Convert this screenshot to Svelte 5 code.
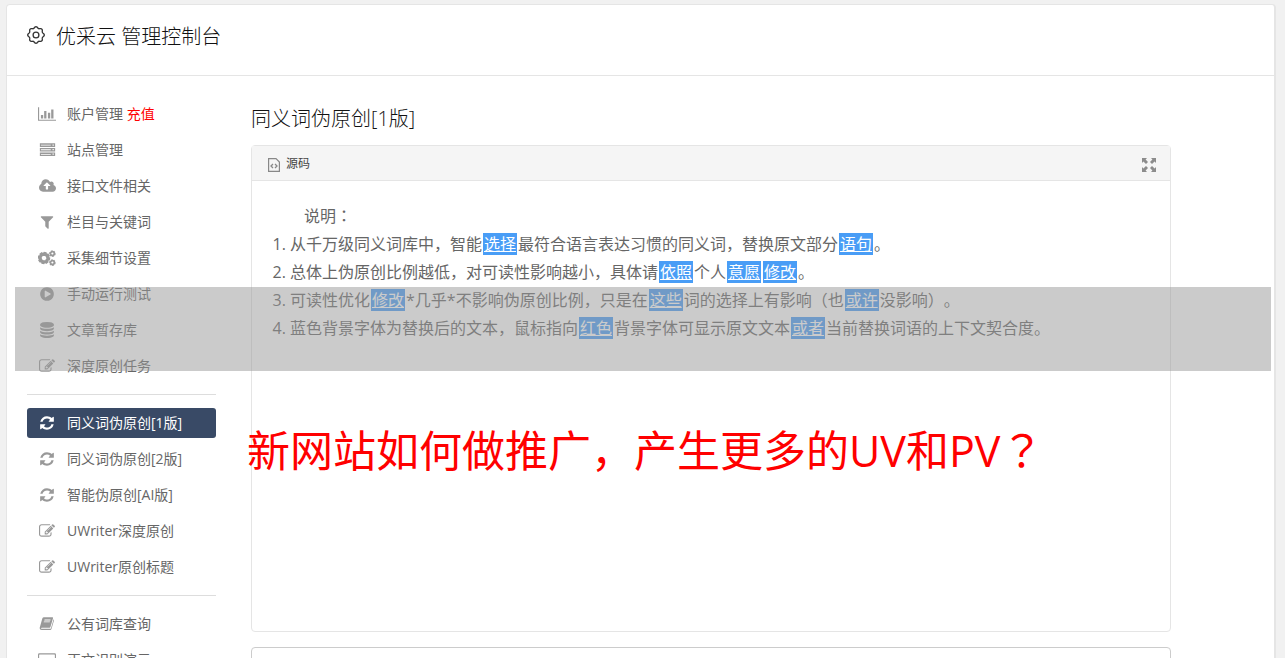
<script lang="ts">
	type Item = { icon: string; label: string; extra?: string; active?: boolean };
	type Part = { text: string; swap?: boolean };

	const groups: Item[][] = [
		[
			{ icon: 'chart', label: '账户管理', extra: '充值' },
			{ icon: 'server', label: '站点管理' },
			{ icon: 'cloud', label: '接口文件相关' },
			{ icon: 'filter', label: '栏目与关键词' },
			{ icon: 'cogs', label: '采集细节设置' },
			{ icon: 'play', label: '手动运行测试' },
			{ icon: 'database', label: '文章暂存库' },
			{ icon: 'edit', label: '深度原创任务' }
		],
		[
			{ icon: 'refresh', label: '同义词伪原创[1版]', active: true },
			{ icon: 'refresh', label: '同义词伪原创[2版]' },
			{ icon: 'refresh', label: '智能伪原创[AI版]' },
			{ icon: 'edit', label: 'UWriter深度原创' },
			{ icon: 'edit', label: 'UWriter原创标题' }
		],
		[
			{ icon: 'book', label: '公有词库查询' },
			{ icon: 'laptop', label: '正文识别演示' }
		]
	];

	// words between braces are the ones that were replaced by a synonym
	const notes = [
		'从千万级同义词库中，智能{选择}最符合语言表达习惯的同义词，替换原文部分{语句}。',
		'总体上伪原创比例越低，对可读性影响越小，具体请{依照}个人{意愿}{修改}。',
		'可读性优化{修改}*几乎*不影响伪原创比例，只是在{这些}词的选择上有影响（也{或许}没影响）。',
		'蓝色背景字体为替换后的文本，鼠标指向{红色}背景字体可显示原文文本{或者}当前替换词语的上下文契合度。'
	];

	function split(s: string): Part[] {
		return s
			.split(/(\{.+?\})/)
			.filter(Boolean)
			.map((t) => (t[0] === '{' ? { text: t.slice(1, -1), swap: true } : { text: t }));
	}

	const icons: Record<string, { box: string; w: number; d: string }> = {
		chart: {
			box: '0 0 2048 1792',
			w: 18,
			d: 'M0 128h128v1408h1920v128H0zM330 1000h260v420H330zM700 560h260v860H700zM1130 760h260v660h-260zM1500 380h260v1040h-260z'
		},
		server: {
			box: '0 0 1792 1792',
			w: 17,
			d: 'M40 150h1712v400H40zM160 310v90h1100v-90zM1460 280v140h140V280zM40 660h1712v400H40zM160 820v90h1100v-90zM1460 790v140h140V790zM40 1170h1712v400H40zM160 1330v90h1100v-90zM1460 1300v140h140v-140z'
		},
		cloud: {
			box: '-64 0 1920 1792',
			w: 17,
			d: 'M1216 864q0-14-9-23l-352-352q-9-9-23-9t-23 9l-351 351q-10 12-10 24 0 14 9 23t23 9h224v352q0 13 9.500 22.500t22.500 9.500h192q13 0 22.500-9.500t9.500-22.500v-352h224q13 0 22.500-9.500t9.500-22.500zm640 288q0 159-112.500 271.500t-271.500 112.500h-1088q-185 0-316.500-131.500t-131.500-316.500q0-130 70-240t188-165q-2-30-2-43 0-212 150-362t362-150q156 0 285.500 87t188.500 231q71-62 166-62 106 0 181 75t75 181q0 76-41 138 130 31 213.500 135.500t83.500 238.500z'
		},
		filter: {
			box: '0 0 1792 1792',
			w: 16,
			d: 'M1595 295q17 41-14 70l-493 493v742q0 42-39 59-13 5-25 5-27 0-45-19l-256-256q-19-19-19-45v-486l-493-493q-31-29-14-70 17-39 59-39h1280q42 0 59 39z'
		},
		play: {
			box: '0 0 1792 1792',
			w: 16,
			d: 'M896 128q209 0 385.500 103t279.500 279.500 103 385.500-103 385.500-279.500 279.500-385.500 103-385.500-103-279.500-279.500-103-385.500 103-385.500 279.500-279.500 385.500-103zm384 823q32-18 32-55t-32-55l-544-320q-31-19-64-1-32 19-32 56v640q0 37 32 56 16 8 32 8 17 0 32-9z'
		},
		database: {
			box: '0 0 1792 1792',
			w: 16,
			d: 'M896 768q237 0 443-43t325-127v170q0 69-103 128t-280 93.500-385 34.500-385-34.500-280-93.500-103-128v-170q119 84 325 127t443 43zm0 768q237 0 443-43t325-127v170q0 69-103 128t-280 93.500-385 34.500-385-34.500-280-93.500-103-128v-170q119 84 325 127t443 43zm0-384q237 0 443-43t325-127v170q0 69-103 128t-280 93.500-385 34.500-385-34.500-280-93.500-103-128v-170q119 84 325 127t443 43zm0-1152q208 0 385 34.500t280 93.500 103 128v128q0 69-103 128t-280 93.500-385 34.500-385-34.500-280-93.500-103-128v-128q0-69 103-128t280-93.500 385-34.500z'
		},
		edit: {
			box: '0 0 1792 1792',
			w: 16,
			d: 'M888 1184l116-116-152-152-116 116v56h96v96h56zm440-720q-16-16-33 1l-350 350q-17 17-1 33t33-1l350-350q17-17 1-33zm80 594v190q0 119-84.500 203.500t-203.500 84.500h-832q-119 0-203.500-84.500t-84.500-203.500v-832q0-119 84.500-203.500t203.500-84.500h832q63 0 117 25 15 7 18 23 3 17-9 29l-49 49q-14 14-32 8-23-6-45-6h-832q-66 0-113 47t-47 113v832q0 66 47 113t113 47h832q66 0 113-47t47-113v-126q0-13 9-22l64-64q15-15 35-7t20 29zm-96-738l288 288-672 672h-288v-288zm444 132l-92 92-288-288 92-92q28-28 68-28t68 28l152 152q28 28 28 68t-28 68z'
		},
		refresh: {
			box: '0 0 1792 1792',
			w: 16,
			d: 'M1639 1056q0 5-1 7-64 268-268 434.500t-478 166.500q-146 0-282.500-55t-243.500-157l-129 129q-19 19-45 19t-45-19-19-45v-448q0-26 19-45t45-19h448q26 0 45 19t19 45-19 45l-137 137q71 66 161 102t187 36q134 0 250-65t186-179q11-17 53-117 8-23 30-23h192q13 0 22.500 9.500t9.500 22.500zm25-800v448q0 26-19 45t-45 19h-448q-26 0-45-19t-19-45 19-45l138-138q-148-137-349-137-134 0-250 65t-186 179q-11 17-53 117-8 23-30 23h-199q-13 0-22.500-9.500t-9.500-22.500v-7q65-268 270-434.500t480-166.500q146 0 284 55.500t245 156.500l130-129q19-19 45-19t45 19 19 45z'
		},
		book: {
			box: '0 0 1792 1792',
			w: 16,
			d: 'M560 128h940q100 0 70 110l-290 1000q-22 74-90 74H300q-70 0-70 50 0 60 90 60h940q60 0 80-60l300-990q60 30 40 120l-280 940q-40 132-150 132H300Q60 1564 70 1330L370 270Q420 128 560 128zM620 400l-28 90h680l28-90zM550 620l-28 90h680l28-90z'
		},
		laptop: {
			box: '0 0 2048 1792',
			w: 18,
			d: 'M160 128h1728q160 0 160 160v1088q0 160-160 160H160Q0 1536 0 1376V288q0-160 160-160zM192 256q-64 0-64 64v1024h1792V320q0-64-64-64z'
		}
	};

	// toothed wheel for the settings entry
	function gear(cx: number, cy: number, r: number, teeth: number, depth: number): string {
		const pts: string[] = [];
		const n = teeth * 4;
		for (let i = 0; i < n; i++) {
			const a = ((i + 0.5) / n) * Math.PI * 2;
			const rr = i % 4 < 2 ? r : r - depth;
			pts.push(`${(cx + rr * Math.cos(a)).toFixed(2)} ${(cy + rr * Math.sin(a)).toFixed(2)}`);
		}
		return `M${pts.join('L')}Z`;
	}

	// softly waved wheel for the header
	function wave(c: number, r: number, lobes: number, depth: number): string {
		const pts: string[] = [];
		for (let i = 0; i < 96; i++) {
			const a = (i / 96) * Math.PI * 2;
			const rr = r + depth * Math.cos(lobes * a);
			pts.push(`${(c + rr * Math.cos(a)).toFixed(2)} ${(c + rr * Math.sin(a)).toFixed(2)}`);
		}
		return `M${pts.join('L')}Z`;
	}
</script>

<svelte:head>
	<title>优采云 管理控制台</title>
</svelte:head>

{#snippet icon(name: string)}
	{#if name === 'cogs'}
		<svg width="18" height="16" viewBox="0 0 18 16" aria-hidden="true">
			<g fill="none" stroke="currentColor">
				<path d={gear(6, 8, 4.8, 8, 1.2)} stroke-width="2.8" />
				<path d={gear(14.4, 3.6, 2.4, 6, 0.6)} stroke-width="1.7" />
				<path d={gear(14.4, 12.6, 2.4, 6, 0.6)} stroke-width="1.7" />
			</g>
		</svg>
	{:else}
		<svg width={icons[name].w} height="16" viewBox={icons[name].box} aria-hidden="true">
			<path d={icons[name].d} fill="currentColor" fill-rule="evenodd" />
		</svg>
	{/if}
{/snippet}

<div class="page">
	<div class="card">
		<header>
			<svg width="20" height="20" viewBox="0 0 20 20" aria-hidden="true">
				<g fill="none" stroke="currentColor" stroke-width="1.3">
					<path d={wave(10, 7.6, 8, 0.7)} />
					<circle cx="10" cy="10" r="2.9" />
				</g>
			</svg>
			<h1>优采云 管理控制台</h1>
		</header>

		<div class="body">
			<nav>
				{#each groups as items}
					<ul>
						{#each items as item}
							<li>
								<a href="#top" class:active={item.active}>
									<span class="icon">{@render icon(item.icon)}</span>
									<span class="label">{item.label}{#if item.extra}{' '}<em>{item.extra}</em>{/if}</span>
								</a>
							</li>
						{/each}
					</ul>
				{/each}
			</nav>

			<main>
				<h2>同义词伪原创[1版]</h2>

				<div class="editor">
					<div class="toolbar">
						<button type="button">
							<svg width="12" height="14" viewBox="0 0 12 14" aria-hidden="true">
								<g fill="none" stroke="#888">
									<path d="M.6.6h7.400l3.400 3.400v9.400H.6z" stroke-width="1.200" />
									<path d="M5 6L3 8l2 2M7 6l2 2-2 2" stroke-width="1.300" />
								</g>
							</svg>
							源码
						</button>
						<button type="button" aria-label="全屏">
							<svg width="14" height="14" viewBox="0 0 14 14" aria-hidden="true">
								<path
									d="M0 0h5L3.600 1.400 6 4 4 6 1.400 3.600 0 5zM14 0v5l-1.400-1.400L10 6 8 4l2.400-2.600L9 0zM0 14V9l1.400 1.400L4 8l2 2-2.400 2.600L5 14zM14 14H9l1.400-1.400L8 10l2-2 2.600 2.400L14 9z"
									fill="#8c8c8c"
								/>
							</svg>
						</button>
					</div>
					<div class="content">
						<p>说明<span class="mid">：</span></p>
						<ol>
							{#each notes as note}
								<li>
									{#each split(note) as part}{#if part.swap}<u>{part.text}</u>{:else}{part.text}{/if}{/each}
								</li>
							{/each}
						</ol>
					</div>
				</div>

				<textarea aria-label="原文"></textarea>
			</main>
		</div>
	</div>

	<div class="band"></div>
	<p class="headline">新网站如何做推广，产生更多的UV和PV<span class="mid">？</span></p>
</div>

<style>
	:global(body) {
		background: #f1f1f1;
	}
	.page {
		position: relative;
		box-sizing: border-box;
		height: 100vh;
		overflow: hidden;
		padding: 4px 9px 0 6px;
		font-family: 'Open Sans', 'Noto Sans CJK SC', sans-serif;
		font-size: 14px;
		text-spacing-trim: space-all;
		color: #666;
	}
	.card {
		background: #fff;
		border: 1px solid #e5e5e5;
		border-right-width: 2px;
		border-radius: 4px;
	}
	header {
		display: flex;
		align-items: center;
		gap: 10px;
		height: 60px;
		padding: 0 19px 10px;
		border-bottom: 1px solid #e5e5e5;
		color: #333;
	}
	h1,
	h2 {
		margin: 0;
		font-size: 20px;
		font-weight: 300;
		line-height: 28px;
		color: #111;
	}
	h1 {
		padding-top: 3px;
	}
	.body {
		display: flex;
		gap: 35px;
		padding: 23px 103px 40px 20px;
	}
	nav {
		flex: 0 0 189px;
	}
	ul {
		display: flex;
		flex-direction: column;
		gap: 6px;
		margin: 0;
		padding: 0;
		list-style: none;
	}
	ul + ul {
		margin-top: 13px;
		padding-top: 13px;
		border-top: 1px solid #ddd;
	}
	a {
		display: flex;
		align-items: center;
		gap: 10px;
		height: 30px;
		padding: 0 10px;
		border-radius: 3px;
		color: #666;
		text-decoration: none;
		white-space: nowrap;
	}
	a.active {
		background: #394a66;
		color: #fff;
	}
	.icon {
		display: flex;
		justify-content: center;
		width: 20px;
		color: #999;
	}
	.active .icon {
		color: #fff;
	}
	.label {
		padding-bottom: 2px;
	}
	em {
		font-style: normal;
		color: #f00;
	}
	main {
		flex: 1;
		min-width: 0;
		padding-top: 6px;
	}
	.editor {
		margin: 12px 0 15px;
		border: 1px solid #e5e5e5;
		border-radius: 4px;
	}
	.toolbar {
		display: flex;
		align-items: center;
		justify-content: space-between;
		height: 34px;
		padding: 0 14px 0 16px;
		border-bottom: 1px solid #e5e5e5;
		background: #f5f5f5;
	}
	button {
		display: flex;
		align-items: center;
		gap: 6px;
		padding: 0;
		border: 0;
		background: none;
		font: inherit;
		font-size: 12px;
		color: #444;
	}
	button svg {
		margin-top: 3px;
	}
	.content {
		min-height: 408px;
		padding: 21px 20px;
		font-size: 16px;
		line-height: 28px;
	}
	.content p {
		margin: 0;
		text-indent: 2em;
	}
	ol {
		margin: 0;
		padding-left: 18px;
	}
	u {
		margin: 0 1px;
		padding: 0 1px;
		background: #499df6;
		color: #fff;
	}
	/* punctuation centred in its cell */
	.mid {
		font-family: 'Noto Sans CJK JP', sans-serif;
		line-height: 1;
	}
	textarea {
		display: block;
		box-sizing: border-box;
		width: 100%;
		height: 120px;
		border: 1px solid #ccc;
		border-radius: 4px;
		resize: none;
	}
	.band {
		position: absolute;
		top: 287px;
		left: 15px;
		right: 14px;
		height: 84px;
		background: rgba(151, 151, 151, 0.5);
	}
	.headline {
		position: absolute;
		top: 421px;
		left: 247px;
		margin: 0;
		font-size: 43px;
		line-height: 60px;
		color: #f00;
		white-space: nowrap;
	}
</style>
